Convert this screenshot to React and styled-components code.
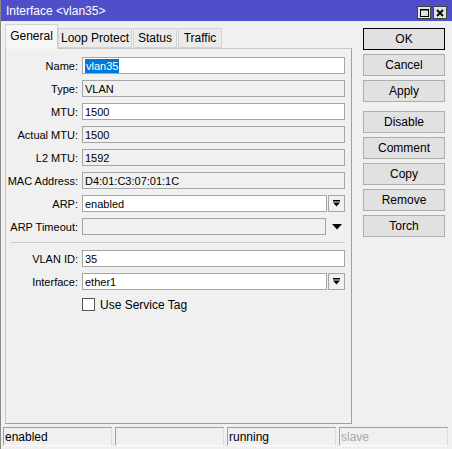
import styled, { createGlobalStyle } from 'styled-components';

const GlobalStyle = createGlobalStyle`
  html, body {
    margin: 0;
    padding: 0;
    background: #f0f0f0;
  }
  * {
    box-sizing: border-box;
  }
`;

const Window = styled.div`
  width: 452px;
  height: 449px;
  display: flex;
  flex-direction: column;
  background: #f0f0f0;
  font-family: 'Liberation Sans', Arial, sans-serif;
  font-size: 11px;
  color: #000;
  border-left: 1px solid #8a8a8a;
  overflow: hidden;
`;

const TitleBar = styled.div`
  height: 21px;
  flex: none;
  display: flex;
  align-items: center;
  justify-content: space-between;
  padding: 0 5px 0 5px;
  background: #4f4fca;
  color: #fff;
  font-size: 12px;
`;

const TitleButtons = styled.div`
  display: flex;
  gap: 2px;
  margin-top: 4px;
`;

const TitleButton = styled.div`
  width: 14px;
  height: 13px;
  display: flex;
  align-items: center;
  justify-content: center;
  background: #e4e4e4;
  border: 1px solid #404040;
`;

const Main = styled.div`
  flex: 1;
  display: flex;
  padding-top: 3px;
  padding-left: 4px;
`;

const TabArea = styled.div`
  width: 347px;
  display: flex;
  flex-direction: column;
`;

const TabRow = styled.div`
  height: 24px;
  display: flex;
  align-items: flex-end;
  position: relative;
  z-index: 1;
`;

const Tab = styled.div`
  height: ${(p) => (p.$active ? '25px' : '20px')};
  margin-bottom: ${(p) => (p.$active ? '-1px' : '0')};
  width: ${(p) => p.$w}px;
  display: flex;
  align-items: center;
  justify-content: center;
  font-size: 12px;
  background: ${(p) => (p.$active ? '#f6f6f6' : '#ebebeb')};
  border: 1px solid #d2d2d2;
  border-bottom: ${(p) => (p.$active ? 'none' : '1px solid #d2d2d2')};
  margin-right: ${(p) => (p.$active ? '0' : '1px')};
  padding-bottom: ${(p) => (p.$active ? '3px' : '0')};
`;

const Panel = styled.div`
  flex: 1;
  border: 1px solid #c6c6c6;
  border-right-color: #a0a0a0;
  border-bottom-color: #a0a0a0;
  padding: 8px 6px 0 0;
  display: grid;
  grid-template-columns: 72px 1fr;
  column-gap: 4px;
  row-gap: 6px;
  align-content: start;
`;

const Label = styled.div`
  height: 17px;
  display: flex;
  align-items: center;
  justify-content: flex-end;
  white-space: nowrap;
`;

const FieldLine = styled.div`
  height: 17px;
  display: flex;
  gap: 1px;
  align-items: stretch;
`;

const Field = styled.div`
  flex: 1;
  display: flex;
  align-items: center;
  padding-left: 2px;
  border: 1px solid #a5a5a5;
  background: ${(p) => (p.$readonly ? '#f0f0f0' : '#fff')};
  white-space: nowrap;
`;

const Selected = styled.span`
  background: #0078d7;
  color: #fff;
  padding: 1px 1px;
`;

const DropButton = styled.div`
  width: 17px;
  flex: none;
  display: flex;
  align-items: center;
  justify-content: center;
  border: 1px solid #a5a5a5;
  background: #f0f0f0;
`;

const DropArrow = styled.div`
  width: 17px;
  flex: none;
  margin-left: 1px;
  display: flex;
  align-items: center;
  justify-content: center;
`;

const Separator = styled.div`
  grid-column: 1 / -1;
  margin-left: 5px;
  margin-top: 1px;
  height: 2px;
  border-top: 1px solid #c8c8c8;
`;

const CheckRow = styled.label`
  grid-column: 2;
  height: 17px;
  display: flex;
  align-items: center;
  gap: 5px;
  font-size: 12px;
`;

const CheckBox = styled.span`
  width: 13px;
  height: 13px;
  background: #fff;
  border: 1px solid #555;
`;

const ButtonColumn = styled.div`
  width: 82px;
  margin-left: 11px;
  margin-top: 4px;
  display: flex;
  flex-direction: column;
  gap: 4px;
`;

const Button = styled.div`
  height: 22px;
  display: flex;
  align-items: center;
  justify-content: center;
  background: #e1e1e1;
  border: 1px solid ${(p) => (p.$default ? '#000' : '#adadad')};
  margin-bottom: ${(p) => (p.$spaced ? '5px' : '0')};
  font-size: 12px;
`;

const StatusBar = styled.div`
  height: 19px;
  flex: none;
  margin: 3px 4px 3px 2px;
  display: grid;
  grid-template-columns: repeat(4, 1fr);
  gap: 3px;
`;

const StatusCell = styled.div`
  display: flex;
  align-items: center;
  padding-left: 1px;
  border: 1px solid #a0a0a0;
  border-right-color: #dcdcdc;
  border-bottom-color: #fff;
  color: ${(p) => (p.$dim ? '#a8a8a8' : '#000')};
  font-size: 12px;
`;

const BarArrow = () => (
  <svg width="7" height="7" viewBox="0 0 7 7">
    <rect x="0" y="0" width="7" height="1.5" fill="#000" />
    <polygon points="0,2.5 7,2.5 3.5,6.5" fill="#000" />
  </svg>
);

const PlainArrow = () => (
  <svg width="10" height="6" viewBox="0 0 10 6">
    <polygon points="0,0 10,0 5,5.5" fill="#000" />
  </svg>
);

const tabs = [
  { name: 'General', w: 53, active: true },
  { name: 'Loop Protect', w: 74 },
  { name: 'Status', w: 44 },
  { name: 'Traffic', w: 44 },
];

const fields = [
  { label: 'Name:', value: 'vlan35', selected: true },
  { label: 'Type:', value: 'VLAN', readonly: true },
  { label: 'MTU:', value: '1500' },
  { label: 'Actual MTU:', value: '1500', readonly: true },
  { label: 'L2 MTU:', value: '1592', readonly: true },
  { label: 'MAC Address:', value: 'D4:01:C3:07:01:1C', readonly: true },
  { label: 'ARP:', value: 'enabled', drop: 'button' },
  { label: 'ARP Timeout:', value: '', readonly: true, drop: 'arrow' },
];

const vlanFields = [
  { label: 'VLAN ID:', value: '35' },
  { label: 'Interface:', value: 'ether1', drop: 'button' },
];

const buttons = ['OK', 'Cancel', 'Apply', 'Disable', 'Comment', 'Copy', 'Remove', 'Torch'];

const renderRow = (f) => [
  <Label key={`l-${f.label}`}>{f.label}</Label>,
  <FieldLine key={`f-${f.label}`}>
    <Field $readonly={f.readonly}>
      {f.selected ? <Selected>{f.value}</Selected> : f.value}
    </Field>
    {f.drop === 'button' && (
      <DropButton>
        <BarArrow />
      </DropButton>
    )}
    {f.drop === 'arrow' && (
      <DropArrow>
        <PlainArrow />
      </DropArrow>
    )}
  </FieldLine>,
];

export default function App() {
  return (
    <>
      <GlobalStyle />
      <Window>
        <TitleBar>
          <span>Interface &lt;vlan35&gt;</span>
          <TitleButtons>
            <TitleButton>
              <svg width="9" height="8" viewBox="0 0 9 8">
                <rect x="0.5" y="0.5" width="8" height="7" fill="none" stroke="#000" />
                <rect x="0" y="0" width="9" height="1.5" fill="#000" />
              </svg>
            </TitleButton>
            <TitleButton>
              <svg width="8" height="8" viewBox="0 0 8 8">
                <path d="M1 1 L7 7 M7 1 L1 7" stroke="#000" strokeWidth="1.8" />
              </svg>
            </TitleButton>
          </TitleButtons>
        </TitleBar>
        <Main>
          <TabArea>
            <TabRow>
              {tabs.map((t) => (
                <Tab key={t.name} $w={t.w} $active={t.active}>
                  {t.name}
                </Tab>
              ))}
            </TabRow>
            <Panel>
              {fields.map(renderRow)}
              <Separator />
              {vlanFields.map(renderRow)}
              <CheckRow>
                <CheckBox />
                Use Service Tag
              </CheckRow>
            </Panel>
          </TabArea>
          <ButtonColumn>
            {buttons.map((b) => (
              <Button key={b} $default={b === 'OK'} $spaced={b === 'Apply'}>
                {b}
              </Button>
            ))}
          </ButtonColumn>
        </Main>
        <StatusBar>
          <StatusCell>enabled</StatusCell>
          <StatusCell />
          <StatusCell>running</StatusCell>
          <StatusCell $dim>slave</StatusCell>
        </StatusBar>
      </Window>
    </>
  );
}
